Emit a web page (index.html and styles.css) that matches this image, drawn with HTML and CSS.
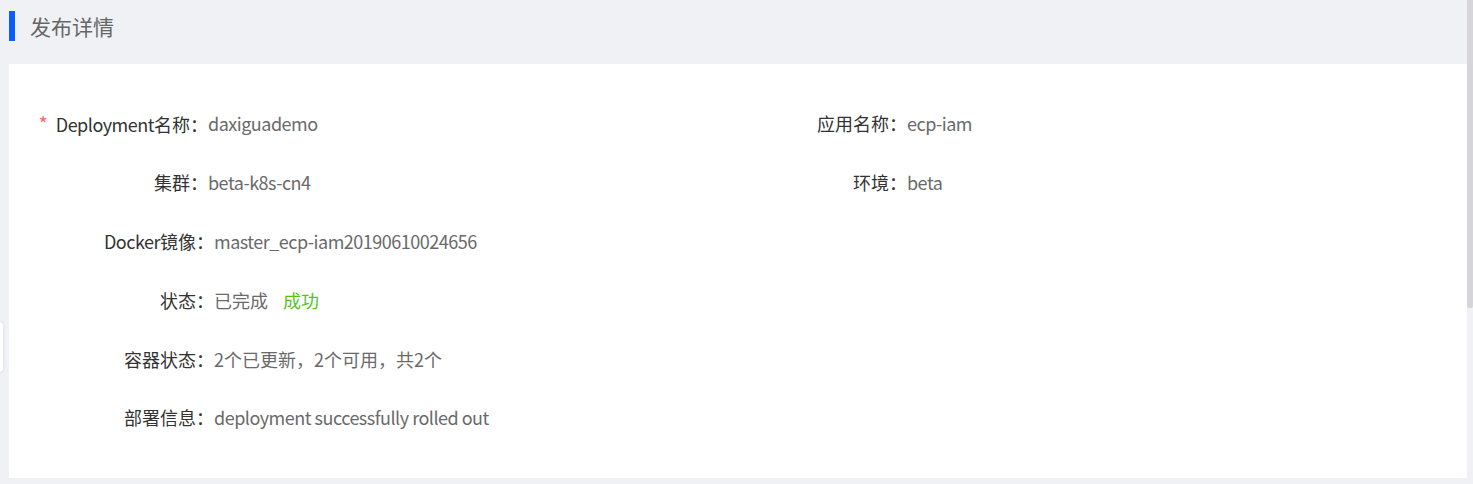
FILE: index.html
```html
<!DOCTYPE html>
<html lang="zh-CN">
<head>
<meta charset="utf-8">
<title>发布详情</title>
<link rel="stylesheet" href="styles.css">
</head>
<body>
<div class="page">
  <div class="header">
    <span class="bar"></span>
    <h1 class="title">发布详情</h1>
  </div>
  <div class="card">
    <div class="grid2">
      <div class="item">
        <span class="label l1"><span class="req">*</span><span class="en">Deployment</span>名称：</span>
        <span class="value en">daxiguademo</span>
      </div>
      <div class="item">
        <span class="label r1">应用名称：</span>
        <span class="value en">ecp-iam</span>
      </div>
      <div class="item">
        <span class="label l1">集群：</span>
        <span class="value en">beta-k8s-cn4</span>
      </div>
      <div class="item">
        <span class="label r1">环境：</span>
        <span class="value en">beta</span>
      </div>
    </div>
    <div class="list">
      <div class="item">
        <span class="label l2"><span class="en">Docker</span>镜像：</span>
        <span class="value en">master_ecp-iam20190610024656</span>
      </div>
      <div class="item">
        <span class="label l2">状态：</span>
        <span class="value">已完成<span class="ok">成功</span></span>
      </div>
      <div class="item">
        <span class="label l2">容器状态：</span>
        <span class="value">2个已更新，2个可用，共2个</span>
      </div>
      <div class="item">
        <span class="label l2">部署信息：</span>
        <span class="value en">deployment successfully rolled out</span>
      </div>
    </div>
  </div>
  <div class="handle"></div>
  <div class="scroll"><div class="thumb"></div></div>
</div>
</body>
</html>
```

FILE: styles.css
```css
* { box-sizing: border-box; }
html, body {
  margin: 0;
  padding: 0;
  height: 100%;
  overflow: hidden;
}
body {
  background: #f0f1f5;
  font-family: "Noto Sans CJK SC", "Noto Sans", sans-serif;
  font-size: 18px;
}
.page {
  position: relative;
  height: 484px;
  padding: 0 6px 0 9px;
}
.header {
  height: 64px;
  display: flex;
  align-items: flex-start;
  padding-top: 11px;
}
.bar {
  width: 6px;
  height: 30px;
  background: #0a5cff;
}
.title {
  margin: 0 0 0 15px;
  font-family: "Noto Sans CJK SC", sans-serif;
  font-size: 21px;
  font-weight: 400;
  color: #666;
  line-height: 30px;
}
.card {
  background: #fff;
  padding: 30px 0;
  height: 414px;
}
.grid2 {
  display: grid;
  grid-template-columns: 729px 1fr;
}
.item {
  height: 58.8px;
  display: flex;
  align-items: center;
  white-space: nowrap;
}
.label {
  text-align: right;
  color: #333;
  flex: none;
}
.en {
  letter-spacing: -0.5px;
}
.l1 { width: 199px; }
.r1 { width: 169px; }
.l2 { width: 205px; }
.req {
  color: #f56c6c;
  margin-right: 8px;
  font-size: 20px;
}
.value {
  color: #6a6a6a;
}
.ok {
  color: #52c41a;
  margin-left: 15px;
}
.handle {
  position: absolute;
  left: -30px;
  top: 322px;
  width: 33px;
  height: 50px;
  background: #fff;
  border-radius: 4px;
  box-shadow: 0 0 3px rgba(0,0,0,0.12);
}
.scroll {
  position: absolute;
  right: 0;
  top: 0;
  width: 6px;
  height: 484px;
  background: #f0f1f5;
}
.thumb {
  width: 6px;
  height: 308px;
  background: #d6d6da;
  border-radius: 0 0 2px 2px;
}
```
